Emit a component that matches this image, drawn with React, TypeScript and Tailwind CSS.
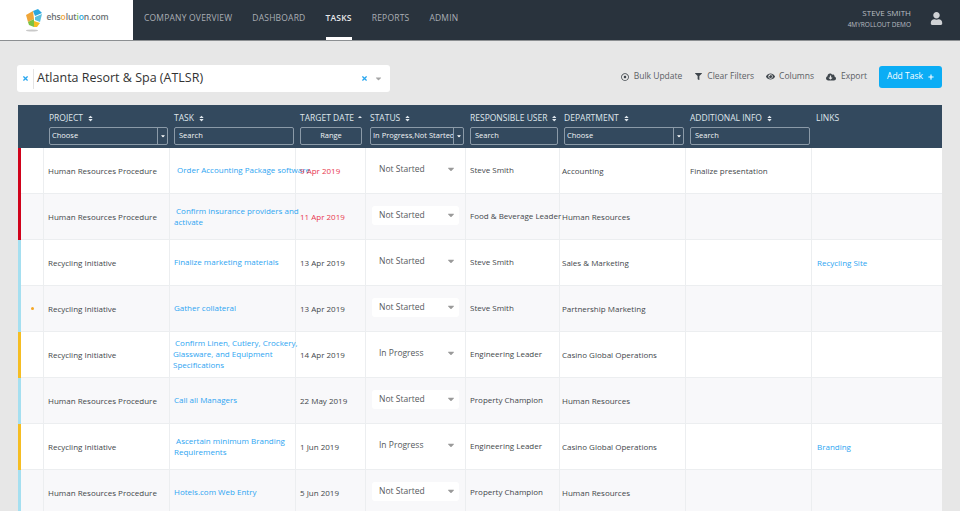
import React from "react";
import { FaUser, FaFilter, FaEye, FaCloudDownloadAlt, FaPlus, FaRegDotCircle, FaSort, FaSortUp, FaCaretDown, FaTimes } from "react-icons/fa";

const col = "grid grid-cols-[26px_126px_126px_70px_100px_94px_126px_126px_127px]";

type Row = {
  bar: string; dot?: boolean; project: string; task: string[]; date: string; late?: boolean; status: string; user: string; dept: string; info?: string; link?: string; taskCls?: string;
};

const rows: Row[] = [
  { bar: "bg-[#d0021b]", project: "Human Resources Procedure", task: ["Order Accounting Package software"], taskCls: "pl-[3px]", date: "9 Apr 2019", late: true, status: "Not Started", user: "Steve Smith", dept: "Accounting", info: "Finalize presentation" },
  { bar: "bg-[#d0021b]", project: "Human Resources Procedure", task: ["\u00a0Confirm insurance providers and", "activate"], date: "11 Apr 2019", late: true, status: "Not Started", user: "Food & Beverage Leader", dept: "Human Resources" },
  { bar: "bg-[#a5dff0]", project: "Recycling Initiative", task: ["Finalize marketing materials"], date: "13 Apr 2019", status: "Not Started", user: "Steve Smith", dept: "Sales & Marketing", link: "Recycling Site" },
  { bar: "bg-[#a5dff0]", dot: true, project: "Recycling Initiative", task: ["Gather collateral"], date: "13 Apr 2019", status: "Not Started", user: "Steve Smith", dept: "Partnership Marketing" },
  { bar: "bg-[#f5bd23]", project: "Recycling Initiative", task: ["\u00a0Confirm Linen, Cutlery, Crockery,", "Glassware, and Equipment", "Specifications"], taskCls: "-ml-[1px]", date: "14 Apr 2019", status: "In Progress", user: "Engineering Leader", dept: "Casino Global Operations" },
  { bar: "bg-[#a5dff0]", project: "Human Resources Procedure", task: ["Call all Managers"], date: "22 May 2019", status: "Not Started", user: "Property Champion", dept: "Human Resources" },
  { bar: "bg-[#f5bd23]", project: "Recycling Initiative", task: ["\u00a0Ascertain minimum Branding", "Requirements"], date: "1 Jun 2019", status: "In Progress", user: "Engineering Leader", dept: "Casino Global Operations", link: "Branding" },
  { bar: "bg-[#a5dff0]", project: "Human Resources Procedure", task: ["Hotels.com Web Entry"], date: "5 Jun 2019", status: "Not Started", user: "Property Champion", dept: "Human Resources" },
];

function Head({ label, sort = "both" }: { label: string; sort?: "both" | "up" | "none" }) {
  return (
    <div className="h-[13px] flex items-center gap-[4px] text-[8.5px] leading-none text-[#dfe6ec] uppercase whitespace-nowrap">
      <span>{label}</span>
      {sort === "both" && <FaSort className="text-[7px]" />}
      {sort === "up" && <FaSortUp className="text-[7px]" />}
    </div>
  );
}

function Select({ label }: { label: string }) {
  return (
    <div className="mt-[2px] h-[18px] flex items-stretch rounded-[2px] border border-[#8b9aa8] text-[7.5px] text-[#f1f4f6]">
      <div className="flex-1 flex items-center pl-[2px] min-w-0 whitespace-nowrap overflow-hidden">{label}</div>
      <div className="w-[10px] border-l border-[#8b9aa8] flex items-center justify-center">
        <FaCaretDown className="text-[6px] text-white" />
      </div>
    </div>
  );
}

function Input({ label, center }: { label: string; center?: boolean }) {
  return (
    <div className={`mt-[2px] h-[18px] flex items-center rounded-[2px] border border-[#8b9aa8] text-[7.5px] text-[#f1f4f6] ${center ? "justify-center" : "pl-[4px]"}`}>
      {label}
    </div>
  );
}

function HeadCell({ children, w }: { children: React.ReactNode; w: string }) {
  return <div className={`pt-[7px] pl-[4px] ${w}`}>{children}</div>;
}

function Logo() {
  return (
    <div className="flex items-center gap-[3px]">
      <svg width="18" height="24" viewBox="0 0 18 24">
        <path d="M1 7 L8 3 L9 11 L3 14 Z" fill="#f0a63a" />
        <path d="M3 14 L9 11 L9 19 L4 17 Z" fill="#7cc242" />
        <path d="M8 3 L13 1 L17 5 L10 8 Z" fill="#2aa7df" />
        <path d="M10 9 L17 6 L15 14 L10 12 Z" fill="#5bc0de" />
        <path d="M9 13 L15 15 L12 19 L9 19 Z" fill="#f5bd23" />
        <ellipse cx="7" cy="22.5" rx="6" ry="1" fill="#c9c9c9" />
      </svg>
      <span className="text-[8.5px] font-semibold text-[#6b6f73] tracking-[-0.1px] -mt-[5px]">
        ehs<span className="text-[#f0a63a]">o</span>lut<span className="text-[#7cc242]">i</span><span className="text-[#2aa7df]">o</span>n.com
      </span>
    </div>
  );
}

export default function App() {
  return (
    <div className="w-[960px] h-[511px] overflow-hidden bg-[#e7e7e7] font-['Open_Sans',sans-serif] text-[#3c4043]">
      <header className="h-[41px] flex bg-[#29333d] border-b border-[#8c8f92]">
        <div className="w-[133px] bg-white flex items-center justify-center pl-[1px]">
          <Logo />
        </div>
        <nav className="flex pl-[11px] gap-[20px] text-[8.5px] tracking-[0.2px] uppercase text-[#a9afb5]">
          <div className="h-full flex items-center pb-[3px]">Company Overview</div>
          <div className="h-full flex items-center pb-[3px]">Dashboard</div>
          <div className="h-full flex items-center pb-[3px] text-[#e6e8ea] font-semibold border-b-[3px] border-white pt-[3px]">Tasks</div>
          <div className="h-full flex items-center pb-[3px]">Reports</div>
          <div className="h-full flex items-center pb-[3px]">Admin</div>
        </nav>
        <div className="ml-auto flex items-center pr-[17px] pb-[3px]">
          <div className="text-right uppercase text-[#b9bec3] pr-[19px]">
            <div className="text-[8px] leading-[11px]">Steve Smith</div>
            <div className="text-[6.5px] leading-[11px] mt-[1px]">4myrollout Demo</div>
          </div>
          <FaUser className="text-[#cfd2d5] text-[13px]" />
        </div>
      </header>

      <div className="h-[64px] flex items-start pl-[17px] pr-[18px] pt-[24px]">
        <div className="w-[373px] h-[27px] bg-white rounded-[3px] flex items-center">
          <div className="w-[17px] flex items-center justify-center border-r border-[#e4e4e4] h-[20px]">
            <FaTimes className="text-[#2aa7ef] text-[7px]" />
          </div>
          <span className="pl-[3px] text-[12.5px] text-[#333]">Atlanta Resort &amp; Spa (ATLSR)</span>
          <FaTimes className="ml-auto text-[#2aa7ef] text-[7px]" />
          <FaCaretDown className="ml-[6px] mr-[7px] text-[#a5a5a5] text-[9px]" />
        </div>
        <div className="ml-auto flex items-center text-[8.5px] text-[#5b6065] h-[21px] mt-[1px]">
          <FaRegDotCircle className="text-[8px] text-[#3f464c]" />
          <span className="ml-[5px]">Bulk Update</span>
          <FaFilter className="ml-[13px] text-[7px] text-[#3f464c]" />
          <span className="ml-[5px]">Clear Filters</span>
          <FaEye className="ml-[12px] text-[9px] text-[#3f464c]" />
          <span className="ml-[4px]">Columns</span>
          <FaCloudDownloadAlt className="ml-[12px] text-[10px] text-[#3f464c]" />
          <span className="ml-[5px]">Export</span>
          <div className="ml-[12px] w-[63px] h-[22px] rounded-[3px] bg-[#0badf5] text-white flex items-center justify-center gap-[5px] text-[8.5px]">
            Add Task <FaPlus className="text-[6px]" />
          </div>
        </div>
      </div>

      <div className="ml-[18px] w-[924px]">
        <div className={`${col} h-[43px] bg-[#33495e]`}>
          <div />
          <HeadCell w="pr-[2px] pl-[5px]"><Head label="Project" /><Select label="Choose" /></HeadCell>
          <HeadCell w="pr-[2px]"><Head label="Task" /><Input label="Search" /></HeadCell>
          <HeadCell w="pr-[4px]"><Head label="Target Date" sort="up" /><Input label="Range" center /></HeadCell>
          <HeadCell w="pr-[2px]"><Head label="Status" /><Select label="In Progress,Not Started" /></HeadCell>
          <HeadCell w="pr-[2px]"><Head label="Responsible User" /><Input label="Search" /></HeadCell>
          <HeadCell w="pr-[2px]"><Head label="Department" /><Select label="Choose" /></HeadCell>
          <HeadCell w="pr-[2px]"><Head label="Additional Info" /><Input label="Search" /></HeadCell>
          <HeadCell w=""><Head label="Links" sort="none" /></HeadCell>
        </div>
        {rows.map((r, i) => (
          <div key={i} className={`${col} h-[46px] border-b border-[#eceef0] text-[8px] ${i % 2 ? "bg-[#f8f8fa]" : "bg-white"}`}>
            <div className="relative border-r border-[#eceef0] flex items-center justify-center">
              <div className={`absolute left-0 top-0 bottom-[-1px] w-[3px] ${r.bar}`} />
              {r.dot && <div className="w-[3px] h-[3px] ml-[3px] rounded-full bg-[#f5a623]" />}
            </div>
            <div className="border-r border-[#eceef0] flex items-center pl-[4px] text-[#43474b]">{r.project}</div>
            <div className="border-r border-[#eceef0] flex items-center pl-[4px] text-[#2ea5f2]">
              <div className={`leading-[10.7px] ${r.taskCls ?? ""}`}>
                {r.task.map((t, j) => <div key={j} className="whitespace-pre">{t}</div>)}
              </div>
            </div>
            <div className={`border-r border-[#eceef0] flex items-center pl-[4px] ${r.late ? "text-[#e8384f]" : "text-[#43474b]"}`}>{r.date}</div>
            <div className="border-r border-[#eceef0] flex items-center px-[6px] pb-[2px]">
              <div className={`w-full h-[19px] flex items-center pl-[7px] pr-[3px] rounded-[3px] text-[8.5px] text-[#55595d] ${i % 2 ? "bg-white" : ""}`}>
                <span>{r.status}</span>
                <FaCaretDown className="ml-auto text-[#9a9a9a] text-[10px] -mt-[2px]" />
              </div>
            </div>
            <div className="border-r border-[#eceef0] flex items-center pl-[4px] text-[#43474b] whitespace-nowrap pb-[2px]">{r.user}</div>
            <div className="border-r border-[#eceef0] flex items-center pl-[2px] text-[#43474b]">{r.dept}</div>
            <div className="border-r border-[#eceef0] flex items-center pl-[4px] text-[#43474b]">{r.info}</div>
            <div className="flex items-center pl-[5px] text-[#2ea5f2]">{r.link}</div>
          </div>
        ))}
      </div>
    </div>
  );
}
